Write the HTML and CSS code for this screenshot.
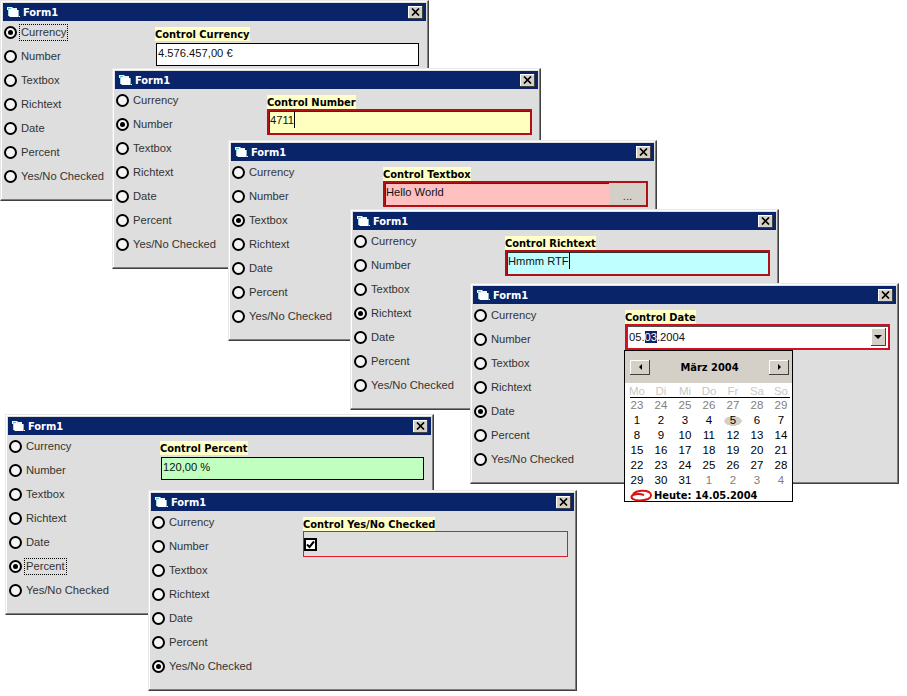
FILE: index.html
```html
<!DOCTYPE html>
<html lang="de">
<head>
<meta charset="UTF-8">
<title>Form1 Controls</title>
<link rel="stylesheet" href="styles.css">
</head>
<body>

<svg class="defs" width="0" height="0">
    <symbol id="folder" viewBox="0 0 14 12">
        <path d="M0 1h5l1 1h4v2H0z" fill="#e8f8f8"/>
        <path d="M1 2h3v1H1z" fill="#58c0c0"/>
        <path d="M2 4h9v7H3L2 10z" fill="#fff"/>
        <path d="M1 3h1v7H1z" fill="#a8d8d8"/>
        <path d="M11 4h1v7h-1z" fill="#8cb4c0"/>
        <path d="M12 10h1v1h-1z" fill="#fff"/>
    </symbol>
    <symbol id="cross" viewBox="0 0 9 8">
        <path d="M1 0.5l7 7M8 0.5l-7 7" stroke="#000" stroke-width="1.7" fill="none"/>
    </symbol>
</svg>

<!-- Currency -->
<div class="window win-currency">
    <div class="titlebar"><svg class="folder"><use href="#folder"/></svg><span class="title">Form1</span><span class="close"><svg class="cross"><use href="#cross"/></svg></span></div>
    <div class="content">
        <div class="options">
            <div class="option"><span class="radio checked"></span><span class="opt-label focus">Currency</span></div>
            <div class="option"><span class="radio"></span><span class="opt-label">Number</span></div>
            <div class="option"><span class="radio"></span><span class="opt-label">Textbox</span></div>
            <div class="option"><span class="radio"></span><span class="opt-label">Richtext</span></div>
            <div class="option"><span class="radio"></span><span class="opt-label">Date</span></div>
            <div class="option"><span class="radio"></span><span class="opt-label">Percent</span></div>
            <div class="option"><span class="radio"></span><span class="opt-label">Yes/No Checked</span></div>
        </div>
        <div class="control">
            <div class="control-label">Control Currency</div>
            <div class="field plain"><span class="value">4.576.457,00 €</span></div>
        </div>
    </div>
</div>

<!-- Number -->
<div class="window win-number">
    <div class="titlebar"><svg class="folder"><use href="#folder"/></svg><span class="title">Form1</span><span class="close"><svg class="cross"><use href="#cross"/></svg></span></div>
    <div class="content">
        <div class="options">
            <div class="option"><span class="radio"></span><span class="opt-label">Currency</span></div>
            <div class="option"><span class="radio checked"></span><span class="opt-label">Number</span></div>
            <div class="option"><span class="radio"></span><span class="opt-label">Textbox</span></div>
            <div class="option"><span class="radio"></span><span class="opt-label">Richtext</span></div>
            <div class="option"><span class="radio"></span><span class="opt-label">Date</span></div>
            <div class="option"><span class="radio"></span><span class="opt-label">Percent</span></div>
            <div class="option"><span class="radio"></span><span class="opt-label">Yes/No Checked</span></div>
        </div>
        <div class="control">
            <div class="control-label">Control Number</div>
            <div class="field active yellow"><span class="value caret">4711</span></div>
        </div>
    </div>
</div>

<!-- Textbox -->
<div class="window win-textbox">
    <div class="titlebar"><svg class="folder"><use href="#folder"/></svg><span class="title">Form1</span><span class="close"><svg class="cross"><use href="#cross"/></svg></span></div>
    <div class="content">
        <div class="options">
            <div class="option"><span class="radio"></span><span class="opt-label">Currency</span></div>
            <div class="option"><span class="radio"></span><span class="opt-label">Number</span></div>
            <div class="option"><span class="radio checked"></span><span class="opt-label">Textbox</span></div>
            <div class="option"><span class="radio"></span><span class="opt-label">Richtext</span></div>
            <div class="option"><span class="radio"></span><span class="opt-label">Date</span></div>
            <div class="option"><span class="radio"></span><span class="opt-label">Percent</span></div>
            <div class="option"><span class="radio"></span><span class="opt-label">Yes/No Checked</span></div>
        </div>
        <div class="control">
            <div class="control-label">Control Textbox</div>
            <div class="field active pink"><span class="value">Hello World</span><span class="dots">...</span></div>
        </div>
    </div>
</div>

<!-- Richtext -->
<div class="window win-richtext">
    <div class="titlebar"><svg class="folder"><use href="#folder"/></svg><span class="title">Form1</span><span class="close"><svg class="cross"><use href="#cross"/></svg></span></div>
    <div class="content">
        <div class="options">
            <div class="option"><span class="radio"></span><span class="opt-label">Currency</span></div>
            <div class="option"><span class="radio"></span><span class="opt-label">Number</span></div>
            <div class="option"><span class="radio"></span><span class="opt-label">Textbox</span></div>
            <div class="option"><span class="radio checked"></span><span class="opt-label">Richtext</span></div>
            <div class="option"><span class="radio"></span><span class="opt-label">Date</span></div>
            <div class="option"><span class="radio"></span><span class="opt-label">Percent</span></div>
            <div class="option"><span class="radio"></span><span class="opt-label">Yes/No Checked</span></div>
        </div>
        <div class="control">
            <div class="control-label">Control Richtext</div>
            <div class="field active cyan"><span class="value caret">Hmmm RTF</span></div>
        </div>
    </div>
</div>

<!-- Date -->
<div class="window win-date">
    <div class="titlebar"><svg class="folder"><use href="#folder"/></svg><span class="title">Form1</span><span class="close"><svg class="cross"><use href="#cross"/></svg></span></div>
    <div class="content">
        <div class="options">
            <div class="option"><span class="radio"></span><span class="opt-label">Currency</span></div>
            <div class="option"><span class="radio"></span><span class="opt-label">Number</span></div>
            <div class="option"><span class="radio"></span><span class="opt-label">Textbox</span></div>
            <div class="option"><span class="radio"></span><span class="opt-label">Richtext</span></div>
            <div class="option"><span class="radio checked"></span><span class="opt-label">Date</span></div>
            <div class="option"><span class="radio"></span><span class="opt-label">Percent</span></div>
            <div class="option"><span class="radio"></span><span class="opt-label">Yes/No Checked</span></div>
        </div>
        <div class="control">
            <div class="control-label">Control Date</div>
            <div class="field date-field"><span class="value date-value">05.<span class="selected">03</span>.2004</span><span class="dropdown"></span></div>
        </div>
    </div>
    <div class="calendar">
        <div class="cal-head">
            <span class="cal-btn"><span class="arrow-left"></span></span>
            <span class="cal-month">März 2004</span>
            <span class="cal-btn"><span class="arrow-right"></span></span>
        </div>
        <div class="cal-grid weekdays">
            <span>Mo</span><span>Di</span><span>Mi</span><span>Do</span><span>Fr</span><span>Sa</span><span>So</span>
        </div>
        <div class="cal-grid days">
            <span class="other">23</span><span class="other">24</span><span class="other">25</span><span class="other">26</span><span class="other">27</span><span class="other">28</span><span class="other">29</span>
            <span>1</span><span>2</span><span>3</span><span>4</span><span class="marked">5</span><span>6</span><span>7</span>
            <span>8</span><span>9</span><span>10</span><span>11</span><span>12</span><span>13</span><span>14</span>
            <span>15</span><span>16</span><span>17</span><span>18</span><span>19</span><span>20</span><span>21</span>
            <span>22</span><span>23</span><span>24</span><span>25</span><span>26</span><span>27</span><span>28</span>
            <span>29</span><span>30</span><span>31</span><span class="other">1</span><span class="other">2</span><span class="other">3</span><span class="other">4</span>
        </div>
        <div class="cal-foot">
            <svg class="today-ring" viewBox="0 0 23 13"><path d="M3 5C7 1 15 1 19 3c3 2 3 5-1 7-5 2-12 2-15 0-2-1-2-3 0-4 3-1 8-1 11 0" fill="none" stroke="#e01010" stroke-width="2"/></svg>
            <span class="today">Heute: 14.05.2004</span>
        </div>
    </div>
</div>

<!-- Percent -->
<div class="window win-percent">
    <div class="titlebar"><svg class="folder"><use href="#folder"/></svg><span class="title">Form1</span><span class="close"><svg class="cross"><use href="#cross"/></svg></span></div>
    <div class="content">
        <div class="options">
            <div class="option"><span class="radio"></span><span class="opt-label">Currency</span></div>
            <div class="option"><span class="radio"></span><span class="opt-label">Number</span></div>
            <div class="option"><span class="radio"></span><span class="opt-label">Textbox</span></div>
            <div class="option"><span class="radio"></span><span class="opt-label">Richtext</span></div>
            <div class="option"><span class="radio"></span><span class="opt-label">Date</span></div>
            <div class="option"><span class="radio checked"></span><span class="opt-label focus">Percent</span></div>
            <div class="option"><span class="radio"></span><span class="opt-label">Yes/No Checked</span></div>
        </div>
        <div class="control">
            <div class="control-label">Control Percent</div>
            <div class="field plain green"><span class="value">120,00 %</span></div>
        </div>
    </div>
</div>

<!-- Yes/No -->
<div class="window win-yesno">
    <div class="titlebar"><svg class="folder"><use href="#folder"/></svg><span class="title">Form1</span><span class="close"><svg class="cross"><use href="#cross"/></svg></span></div>
    <div class="content">
        <div class="options">
            <div class="option"><span class="radio"></span><span class="opt-label">Currency</span></div>
            <div class="option"><span class="radio"></span><span class="opt-label">Number</span></div>
            <div class="option"><span class="radio"></span><span class="opt-label">Textbox</span></div>
            <div class="option"><span class="radio"></span><span class="opt-label">Richtext</span></div>
            <div class="option"><span class="radio"></span><span class="opt-label">Date</span></div>
            <div class="option"><span class="radio"></span><span class="opt-label">Percent</span></div>
            <div class="option"><span class="radio checked"></span><span class="opt-label">Yes/No Checked</span></div>
        </div>
        <div class="control">
            <div class="control-label">Control Yes/No Checked</div>
            <div class="field thin"><span class="checkbox"><svg viewBox="0 0 9 9" width="9" height="9"><path d="M1 4.5l2.5 2.5L8 1.5" fill="none" stroke="#000" stroke-width="2"/></svg></span></div>
        </div>
    </div>
</div>

</body>
</html>
```

FILE: styles.css
```css
/* Seite */
body {
    margin: 0;
    background-color: #fff;
    font-family: "Liberation Sans", Arial, sans-serif;
    font-size: 11.2px;
    color: #000;
}
.defs {
    display: block;
    height: 0;
}

/* Fenster */
.window {
    position: absolute;
    width: 429px;
    height: 201px;
    box-sizing: border-box;
    padding: 2px;
    border: 1px solid;
    border-color: #e8e8e8 #404040 #404040 #e8e8e8;
    box-shadow: inset -1px -1px #808080, inset 1px 1px #fff;
    background-color: #dedede;
}
.win-currency { left: 0; top: 0; }
.win-number { left: 112px; top: 68px; }
.win-textbox { left: 228px; top: 140px; }
.win-richtext { left: 350px; top: 209px; }
.win-date { left: 470px; top: 283px; }
.win-percent { left: 5px; top: 414px; }
.win-yesno { left: 148px; top: 490px; }

/* Titelleiste */
.titlebar {
    display: flex;
    align-items: center;
    height: 18px;
    padding: 0 3px 0 4px;
    background-color: #0a246a;
}
.folder {
    width: 14px;
    height: 12px;
    margin-right: 2px;
}
.title {
    flex: 1;
    font-family: "DejaVu Sans Condensed", "DejaVu Sans", Verdana, sans-serif;
    font-weight: bold;
    font-size: 11px;
    color: #fff;
}
.close {
    display: flex;
    align-items: center;
    justify-content: center;
    width: 15px;
    height: 13px;
    box-sizing: border-box;
    background-color: #d4d0c8;
    box-shadow: inset -1px -1px #404040, inset 1px 1px #fff;
}
.cross {
    width: 9px;
    height: 8px;
}

/* Inhalt */
.content {
    display: grid;
    grid-template-columns: 152px 264px;
}
.options {
    display: grid;
    grid-auto-rows: 22px;
    row-gap: 2px;
    align-content: start;
    padding-left: 1px;
}
.option {
    display: flex;
    align-items: center;
}
.radio {
    position: relative;
    width: 13px;
    height: 13px;
    box-sizing: border-box;
    margin-right: 3px;
    border: 2px solid #000;
    border-radius: 50%;
    background-color: #f4f4f4;
}
.radio.checked::after {
    content: "";
    position: absolute;
    left: 2px;
    top: 2px;
    width: 5px;
    height: 5px;
    border-radius: 50%;
    background-color: #000;
}
.opt-label {
    padding: 0 1px;
    color: #333;
}
.opt-label.focus {
    outline: 1px dotted #000;
    line-height: 15px;
}

/* Controls */
.control {
    padding-top: 6px;
}
.control-label {
    display: inline-block;
    vertical-align: top;
    height: 13px;
    padding-top: 1px;
    line-height: 14px;
    background-color: #ffffc8;
    font-family: "DejaVu Sans Condensed", "DejaVu Sans", Verdana, sans-serif;
    font-weight: bold;
    font-size: 11px;
}
.field {
    display: flex;
    width: 265px;
    height: 26px;
    box-sizing: border-box;
}
.field.plain {
    width: 263px;
    height: 23px;
    margin: 2px 0 0 1px;
    border: 1px solid #000;
    background-color: #fff;
}
.field.active {
    border: 2px solid #b01018;
    box-shadow: inset 1px 1px #303030;
}
.field.thin {
    border: 1px solid #e01828;
}
.field.green { background-color: #c0ffc0; }
.yellow { background-color: #ffffc0; }
.pink { background-color: #ffc0c0; }
.cyan { background-color: #c0ffff; }
.value {
    flex: 1;
    padding: 2px 0 0 1px;
    line-height: 15px;
    color: #111;
}
.caret {
    flex: none;
    align-self: flex-start;
    height: 15px;
    border-right: 1px solid #000;
}
.dots {
    width: 37px;
    background-color: #d4d0c8;
    text-align: center;
    line-height: 26px;
    color: #333;
}

/* Datum */
.date-field {
    border: 2px solid #d01020;
    background-color: #fff;
    box-shadow: inset 1px 1px #505050;
}
.date-value {
    padding: 4px 0 0 2px;
}
.selected {
    background-color: #0a246a;
    color: #fff;
}
.dropdown {
    position: relative;
    width: 15px;
    height: 18px;
    margin: 2px 2px 0 0;
    background-color: #d4d0c8;
    box-shadow: inset -1px -1px #404040, inset 1px 1px #fff;
}
.dropdown::after {
    content: "";
    position: absolute;
    left: 3px;
    top: 7px;
    border: 4px solid transparent;
    border-top: 4px solid #000;
    border-bottom: 0;
}

/* Kalender */
.calendar {
    position: absolute;
    left: 153px;
    top: 66px;
    width: 169px;
    height: 152px;
    box-sizing: border-box;
    border: 1px solid #000;
    background-color: #fff;
    font-size: 11.5px;
}
.cal-head {
    display: flex;
    align-items: center;
    justify-content: space-between;
    height: 32px;
    padding: 0 3px 0 5px;
    background-color: #d4d0c8;
}
.cal-btn {
    display: flex;
    align-items: center;
    justify-content: center;
    width: 20px;
    height: 15px;
    box-shadow: inset -1px -1px #404040, inset 1px 1px #fff;
}
.arrow-left, .arrow-right {
    border: 3px solid transparent;
}
.arrow-left {
    border-right: 3px solid #000;
    border-left: 0;
}
.arrow-right {
    border-left: 3px solid #000;
    border-right: 0;
}
.cal-month, .today {
    font-family: "DejaVu Sans Condensed", "DejaVu Sans", Verdana, sans-serif;
    font-weight: bold;
    font-size: 11px;
}
.cal-grid {
    display: grid;
    grid-template-columns: repeat(7, 24px);
    grid-auto-rows: 15px;
    line-height: 15px;
    text-align: center;
}
.weekdays {
    height: 14px;
    margin: 1px 0 0;
    color: #c8c8c8;
    background: linear-gradient(#000, #000) no-repeat 5px 13px / 160px 1px;
}
.other {
    color: #808080;
}
.marked {
    background: radial-gradient(ellipse closest-side, #d4d0c8 94%, transparent) no-repeat center / 18px 10px;
}
.cal-foot {
    display: flex;
    align-items: center;
    height: 15px;
    padding-left: 5px;
}
.today-ring {
    width: 23px;
    height: 13px;
    margin-right: 1px;
}

/* Checkbox */
.checkbox {
    display: flex;
    align-items: center;
    justify-content: center;
    width: 13px;
    height: 13px;
    box-sizing: border-box;
    margin: 6px 0 0 0;
    border: 2px solid #000;
    background-color: #fff;
}
```
